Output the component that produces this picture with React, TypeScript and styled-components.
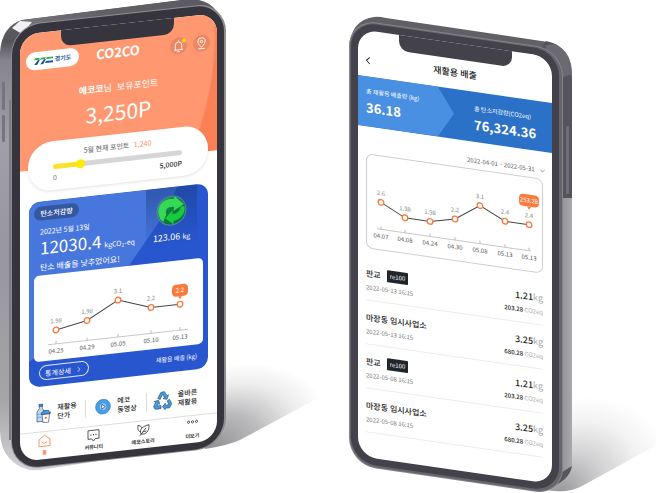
import React from "react";
import styled, { createGlobalStyle } from "styled-components";
import { ChevronDown, ChevronLeft, ChevronRight } from "lucide-react";

const GlobalStyle = createGlobalStyle`
  *, *::before, *::after { box-sizing: border-box; }
  body {
    margin: 0;
    background: #fff;
    color: #222;
    font-family: "Noto Sans CJK KR", "Noto Sans", sans-serif;
    font-size: 7px;
    line-height: 10px;
  }
  h1, h2, p, ul { margin: 0; padding: 0; font: inherit; }
  li { list-style: none; }
  button, input, select { font: inherit; color: inherit; margin: 0; padding: 0; border: 0; background: none; }
  a { color: inherit; text-decoration: none; }
`;

const Stage = styled.main`
  display: grid;
  grid-template-columns: repeat(2, minmax(0, 1fr));
  overflow: hidden;
`;

const Device = styled.section<{ $left: number; $top: number }>`
  position: relative;
  min-height: 493px;
  padding: ${(p) => p.$top}px 0 0 ${(p) => p.$left}px;
`;

const Hardware = styled.svg`
  position: absolute;
  top: 0;
  left: 0;
  width: 335px;
  height: 493px;
  overflow: visible;
`;

const Screen = styled.div<{ $tilt: number; $width: number }>`
  position: relative;
  display: flex;
  flex-direction: column;
  width: ${(p) => p.$width}px;
  min-height: 427px;
  overflow: hidden;
  border-radius: 19px;
  background: #fff;
  transform: skewY(${(p) => p.$tilt}deg);
`;

const Notch = styled.div<{ $color: string }>`
  position: absolute;
  z-index: 2;
  top: -1px;
  left: 41px;
  width: 113px;
  height: 17px;
  border-radius: 0 0 10px 10px;
  background: ${(p) => p.$color};
`;

/* ---------- points screen ---------- */

const PointsHero = styled.header`
  position: relative;
  display: flex;
  flex-direction: column;
  align-items: center;
  height: 137px;
  padding-top: 19px;
  color: #fff;
  background: radial-gradient(ellipse 230px 260px at -34px 20px, #ff9871 99%, #fc8056 100%);
`;

const TopBar = styled.div`
  display: grid;
  grid-template-columns: 1fr auto 1fr;
  align-items: center;
  width: 100%;
  padding: 0 7px 0 6px;
`;

const AgencyLink = styled.a`
  display: flex;
  align-items: center;
  justify-content: center;
  gap: 2px;
  width: 53px;
  height: 18px;
  border-radius: 9px;
  background: #fff;
  color: #23579b;
  font-size: 6px;
  font-weight: 700;
`;

const Brand = styled.h1`
  font-size: 13px;
  font-weight: 700;
  line-height: 18px;
`;

const TopActions = styled.div`
  display: flex;
  justify-content: flex-end;
  gap: 6px;
`;

const RoundButton = styled.button`
  display: grid;
  place-items: center;
  width: 17px;
  height: 17px;
  border-radius: 50%;
  background: rgba(190, 90, 60, 0.28);
`;

const Greeting = styled.p`
  margin-top: 19px;
  font-size: 9px;
  line-height: 14px;
  b { font-weight: 700; }
  span { margin-left: 3px; }
`;

const Balance = styled.p`
  margin-top: 2px;
  font-size: 21px;
  font-weight: 400;
  line-height: 30px;
`;

const GoalCard = styled.section`
  position: relative;
  display: flex;
  flex-direction: column;
  height: 49px;
  margin: -27px 9px 0 8px;
  padding: 7px 26px 0 25px;
  border-radius: 24px;
  background: #fff;
  box-shadow: 0 1px 3px rgba(90, 60, 50, 0.16);
`;

const GoalLabel = styled.label`
  text-align: center;
  color: #555;
  em { margin-left: 3px; color: #ff8a60; font-style: normal; }
`;

const GoalRange = styled.input`
  appearance: none;
  display: block;
  width: 100%;
  height: 5px;
  margin-top: 6px;
  border-radius: 3px;
  background: linear-gradient(90deg, #f7e32b 21%, #d6d6d6 21%);
  &::-webkit-slider-thumb {
    appearance: none;
    width: 9px;
    height: 9px;
    border-radius: 50%;
    background: #ffea00;
  }
`;

const RangeEnds = styled.div`
  display: flex;
  justify-content: space-between;
  margin-top: 3px;
  color: #333;
  span:first-child { color: #777; }
  span:last-child { font-weight: 500; }
`;

const CarbonCard = styled.section`
  position: relative;
  height: 185px;
  margin: 10px 9px 0;
  padding: 5px;
  overflow: hidden;
  border-radius: 11px;
  background: #2856cf;
  color: #fff;
  &::before {
    content: "";
    position: absolute;
    inset: 0;
    background: #4776dc;
    clip-path: polygon(0 0, 83% 0, 75% 15%, 55% 41%, 3% 84%, 0 86%);
  }
`;

const CarbonTop = styled.div`
  position: relative;
  display: grid;
  grid-template-columns: 1fr 56px;
  height: 69px;
`;

const CarbonTag = styled.h2`
  width: 45px;
  height: 14px;
  border-radius: 7px;
  background: #35579f;
  font-weight: 500;
  line-height: 14px;
  text-align: center;
`;

const CarbonText = styled.div`
  padding-left: 6px;
  p:nth-child(1) { margin-top: 6px; }
  p:nth-child(3) { font-size: 8px; line-height: 10px; }
`;

const CarbonAmount = styled.p`
  font-size: 17px;
  line-height: 22px;
  white-space: nowrap;
  small { margin-left: 3px; font-size: 7px; }
  sub { font-size: 5px; line-height: 0; vertical-align: -1px; }
`;

const Recycled = styled.div`
  display: flex;
  flex-direction: column;
  align-items: center;
  height: 60px;
  margin: -5px 6px 0 -1px;
  padding-top: 8px;
  background: linear-gradient(rgba(25, 60, 130, 0.5), rgba(30, 65, 170, 0));
  font-size: 9px;
  line-height: 12px;
  white-space: nowrap;
  svg { flex: none; margin-bottom: 5px; }
  small { font-size: 7px; }
`;

const ChartPanel = styled.div`
  position: relative;
  height: 86px;
  border-radius: 5px;
  background: #fff;
  svg { display: block; width: 100%; height: 100%; }
`;

const CarbonFooter = styled.div`
  position: relative;
  display: flex;
  justify-content: space-between;
  align-items: center;
  padding: 4px 6px 0 5px;
  font-size: 6px;
`;

const DetailButton = styled.button`
  display: flex;
  align-items: center;
  justify-content: center;
  gap: 4px;
  width: 50px;
  height: 15px;
  border: 1px solid #dfe7fa;
  border-radius: 8px;
  font-size: 7px;
`;

const Shortcuts = styled.ul`
  display: grid;
  grid-template-columns: 57px 61px 1fr;
  flex: 1;
  align-items: center;
  padding: 9px 14px 0 8px;
  li + li { border-left: 1px solid #ddd; }
`;

const Shortcut = styled.a`
  display: flex;
  align-items: center;
  justify-content: center;
  gap: 6px;
  font-weight: 500;
  line-height: 9px;
  white-space: nowrap;
`;

const TabBar = styled.nav`
  display: grid;
  grid-template-columns: repeat(4, 1fr);
  height: 28px;
  border-top: 1px solid #ddd;
`;

const Tab = styled.a<{ $active?: boolean }>`
  display: flex;
  flex-direction: column;
  align-items: center;
  justify-content: center;
  gap: 1px;
  padding-bottom: 2px;
  color: ${(p) => (p.$active ? "#fb7a43" : "#333")};
  font-size: 5px;
  font-weight: 700;
  line-height: 8px;
`;

/* ---------- emission screen ---------- */

const PageHeader = styled.header`
  display: grid;
  grid-template-columns: 20px 1fr 20px;
  align-items: center;
  height: 46px;
  padding: 13px 0 0;
  h1 { font-size: 9px; font-weight: 500; text-align: center; }
  button { display: grid; place-items: center; color: #333; }
`;

const Totals = styled.section`
  display: grid;
  grid-template-columns: 96px 1fr;
  height: 50px;
  background: #2b71c7;
  color: #fff;
`;

const Total = styled.div<{ $first?: boolean }>`
  padding: ${(p) => (p.$first ? "10px 0 0 8px" : "12px 0 0 20px")};
  background: ${(p) => (p.$first ? "#4990e3" : "transparent")};
  clip-path: ${(p) => (p.$first ? "polygon(0 0, 83% 0, 100% 50%, 83% 100%, 0 100%)" : "none")};
  font-size: 6px;
  white-space: nowrap;
  strong { display: block; font-size: 13px; line-height: 22px; }
`;

const PeriodRow = styled.div`
  display: flex;
  align-items: center;
  justify-content: flex-end;
  gap: 4px;
  padding: 14px 6px 3px 0;
  color: #555;
  svg { flex: none; }
`;

const Period = styled.select`
  appearance: none;
  height: 10px;
  font-size: 6px;
  line-height: 10px;
`;

const HistoryChart = styled.div`
  height: 95px;
  margin: 0 9px 8px 8px;
  border: 1px solid #cfcfcf;
  border-radius: 7px;
  svg { display: block; width: 100%; height: 100%; }
`;

const Records = styled.ul`
  margin: 0 9px 0 8px;
`;

const Record = styled.li`
  display: flex;
  justify-content: space-between;
  padding: 9px 0 5px;
  border-bottom: 1px solid #ecebf3;
  line-height: 14px;
`;

const Place = styled.h2`
  display: flex;
  align-items: center;
  gap: 6px;
  height: 15px;
  font-size: 8px;
  font-weight: 500;
`;

const Badge = styled.span`
  padding: 0 3px;
  border-radius: 1px;
  background: #20262c;
  color: #fff;
  font-size: 6px;
  font-weight: 400;
  line-height: 12px;
`;

const Stamp = styled.time`
  display: block;
  color: #777;
  font-size: 6px;
`;

const Measure = styled.div`
  padding-top: 1px;
  text-align: right;
  color: #aaa;
  p { height: 14px; font-size: 9px; }
  p + p { font-size: 6px; }
  b { color: #222; font-weight: 500; }
`;

/* ---------- drawings ---------- */

type Point = { x: number; y: number; value?: string; date: string };

function LineChart({ points, axis, width, height, callout, calloutY, from, to }: {
  points: Point[]; axis: number; width: number; height: number;
  callout: string; calloutY: number; from: number; to: number;
}) {
  const last = points[points.length - 1];
  const half = callout.length > 4 ? 10 : 8;
  return (
    <svg viewBox={`0 0 ${width} ${height}`} fontSize="6" textAnchor="middle" role="img" aria-label="재활용 배출 그래프">
      <path d={`M${from} ${axis}H${to}`} stroke="#c8c8c8" />
      {points.map((p, i) => (
        <path key={i} d={`M${p.x} ${axis - 3}v3`} stroke="#bbb" />
      ))}
      <polyline points={points.map((p) => `${p.x},${p.y}`).join(" ")} fill="none" stroke="#444" />
      {points.map((p, i) => (
        <g key={i}>
          <circle cx={p.x} cy={p.y} r="2.8" fill="#fff" stroke="#f9793f" strokeWidth="1.3" />
          {p.value && <text x={p.x} y={p.y - 7} fill="#888">{p.value}</text>}
          <text x={p.x} y={axis + 9} fill="#555">{p.date}</text>
        </g>
      ))}
      <rect x={last.x - half} y={calloutY - 6} width={half * 2} height="12" rx="4" fill="#fa7b3e" />
      <path d={`M${last.x - 2} ${calloutY + 6}l2 3 2-3z`} fill="#fa7b3e" />
      <text x={last.x} y={calloutY + 2} fill="#fff">{callout}</text>
    </svg>
  );
}

const weekly: Point[] = [
  { x: 22, y: 56, value: "1.98", date: "04.25" },
  { x: 53, y: 50, value: "1.98", date: "04.29" },
  { x: 84, y: 33, value: "3.1", date: "05.05" },
  { x: 117, y: 44, value: "2.2", date: "05.10" },
  { x: 146, y: 44, date: "05.13" },
];

const history: Point[] = [
  { x: 14, y: 46, value: "2.6", date: "04.07" },
  { x: 38, y: 58, value: "1.98", date: "04.08" },
  { x: 63, y: 58, value: "1.98", date: "04.24" },
  { x: 88, y: 52, value: "2.2", date: "04.30" },
  { x: 113, y: 35, value: "3.1", date: "05.08" },
  { x: 138, y: 47, value: "2.4", date: "05.13" },
  { x: 162, y: 47, value: "2.4", date: "05.13" },
];

const records = [
  { place: "판교", tag: "re100", time: "2022-05-13 16:15", kg: "1.21", co2: "203.28" },
  { place: "마장동 임시사업소", time: "2022-05-13 16:15", kg: "3.25", co2: "680.28" },
  { place: "판교", tag: "re100", time: "2022-05-08 16:15", kg: "1.21", co2: "203.28" },
  { place: "마장동 임시사업소", time: "2022-05-08 16:15", kg: "3.25", co2: "680.28" },
];

const LeftHardware = () => (
  <Hardware viewBox="0 0 335 493" aria-hidden="true">
    <defs>
      <linearGradient id="sideA" x1="0" y1="0" x2="0" y2="1">
        <stop offset="0" stopColor="#66656c" /><stop offset=".09" stopColor="#55545b" />
        <stop offset=".13" stopColor="#85848a" /><stop offset=".3" stopColor="#a09fa5" />
        <stop offset=".55" stopColor="#98979d" /><stop offset=".85" stopColor="#a5a4a9" />
        <stop offset="1" stopColor="#d2d1d5" />
      </linearGradient>
      <linearGradient id="topA" x1="0" y1="0" x2="1" y2="0">
        <stop offset="0" stopColor="#77767c" /><stop offset=".4" stopColor="#626168" />
        <stop offset=".9" stopColor="#5b5a61" /><stop offset="1" stopColor="#77767c" />
      </linearGradient>
      <radialGradient id="shadeA" cx="0" cy="0" r="1" gradientUnits="userSpaceOnUse" gradientTransform="translate(212 447) rotate(-24) scale(120 74)">
        <stop offset="0" stopColor="#858488" stopOpacity=".9" /><stop offset=".4" stopColor="#8e8d91" stopOpacity=".6" />
        <stop offset=".75" stopColor="#999" stopOpacity=".18" /><stop offset="1" stopColor="#999" stopOpacity="0" />
      </radialGradient>
    </defs>
    <path d="M205 355H330L322 396 240 440Q230 445 205 449Z" fill="url(#shadeA)" />
    <path d="M0 52Q2 26 22 20L182 0Q218 -6 226 34V424Q224 438 205 445L46 469Q24 474 10 459Q0 449 0 430Z" fill="url(#sideA)" />
    <path d="M15 24L22 20 182 0Q220 -5 226 36L208 14 24 34Z" fill="url(#topA)" />
    <path d="M12 28L20 21 32 22 22 34Z" fill="#f1f1f3" />
    <path d="M10 100V440" stroke="#7e7d84" strokeWidth="2" />
    <rect x="2" y="82" width="3" height="28" rx="1" fill="#76757b" />
    <rect x="2" y="115" width="3" height="27" rx="1" fill="#76757b" />
    <g transform="translate(118 0) skewY(-6.3)">
      <rect x="-107" y="14" width="215" height="445" rx="29" fill="#8d8c92" />
      <rect x="-106" y="15" width="212" height="443" rx="28" fill="#36343c" />
    </g>
  </Hardware>
);

const RightHardware = () => (
  <Hardware viewBox="335 0 335 493" aria-hidden="true">
    <defs>
      <radialGradient id="shadeB" cx="0" cy="0" r="1" gradientUnits="userSpaceOnUse" gradientTransform="translate(560 492) rotate(-34) scale(116 84)">
        <stop offset="0" stopColor="#858488" stopOpacity=".85" /><stop offset=".4" stopColor="#929195" stopOpacity=".42" />
        <stop offset=".75" stopColor="#999" stopOpacity=".12" /><stop offset="1" stopColor="#999" stopOpacity="0" />
      </radialGradient>
      <linearGradient id="sideB" x1="0" y1="0" x2="1" y2="0">
        <stop offset="0" stopColor="#8a898f" /><stop offset=".6" stopColor="#9d9ca2" /><stop offset="1" stopColor="#a9a8ad" />
      </linearGradient>
    </defs>
    <path d="M550 385H665L655 446 582 486Q568 494 545 490Z" fill="url(#shadeB)" />
    <path d="M349 50Q350 20 374 17Q378 16 386 18L548 42Q572 48 572 82V462Q571 475 556 483L536 487Z" fill="#606067" />
    <path d="M546 41L553 43Q572 50 572 84V198H556V75Q556 57 540 49Z" fill="#55545b" />
    <path d="M546 45L555 44Q572 52 572 74L561 78Q558 58 546 51Z" fill="#6b6a71" />
    <path d="M558 198H572V466L558 476Z" fill="url(#sideB)" />
    <path d="M559 474L572 466Q570 479 552 487Z" fill="#57565e" />
    <rect x="566" y="126" width="3" height="68" rx="1" fill="#6f6e75" />
    <g transform="translate(455 0) skewY(8.2)">
      <rect x="-106" y="34" width="214" height="446" rx="27" fill="#85848b" />
      <rect x="-105" y="35" width="212" height="444" rx="26" fill="#66656c" />
      <rect x="-104" y="36" width="208" height="441" rx="25" fill="#434149" />
    </g>
  </Hardware>
);

const AgencyMark = () => (
  <svg width="19" height="7" viewBox="0 0 19 7" aria-hidden="true">
    <path d="M1 0H6L5 2H0zM7 0H12L11 2H6zM13 0H19V2H12z" fill="#37a650" />
    <path d="M4 2H6L3 7H0zM10 2H12L9 7H6zM12 4H19V6H11z" fill="#1c4f9c" />
  </svg>
);

const Bell = () => (
  <svg width="17" height="17" viewBox="0 0 17 17" fill="none" stroke="#fff" strokeWidth=".9" aria-hidden="true">
    <path d="M4 12.5H13M5.3 12.5V8A3.2 3.5 0 0 1 11.7 8V12.5M8.5 3.2V4.5M7.2 14.3H9.8" />
    <circle cx="14" cy="3.8" r="1.8" fill="#ffe600" stroke="none" />
  </svg>
);

const Pin = () => (
  <svg width="17" height="17" viewBox="0 0 17 17" fill="none" stroke="#fff" strokeWidth=".9" aria-hidden="true">
    <path d="M8.5 12.5C6.5 10 4.8 8.7 4.8 6.6A3.7 3.7 0 0 1 12.2 6.6C12.2 8.7 10.5 10 8.5 12.5ZM5 13.8H12" />
    <circle cx="8.5" cy="6.7" r="1.2" />
  </svg>
);

const GreenMark = () => (
  <svg width="31" height="31" viewBox="0 0 30 30" aria-hidden="true">
    <defs>
      <linearGradient id="green" x1="0" y1="0" x2="1" y2="1">
        <stop offset="0" stopColor="#23a35a" /><stop offset=".5" stopColor="#0b7a3e" /><stop offset="1" stopColor="#0a6e44" />
      </linearGradient>
    </defs>
    <circle cx="15" cy="15" r="14.5" fill="#5f93a6" opacity=".7" />
    <circle cx="15" cy="15" r="13.4" fill="url(#green)" />
    <path d="M3 19C0 8 8 2 17 4L18 1.5 27 10 17 15.5 17.5 11.5C11 10.5 8.5 13 10 18L7 25Q4 23 3 19Z" fill="#35d955" />
    <path d="M27.5 12C29 20 23 25 17 25V28.5L9 22 16 14.5V18.5C20 18.5 23 16.5 24 12Z" fill="#17cc3b" />
  </svg>
);

const Bottle = () => (
  <svg width="15" height="20" viewBox="0 0 15 20" stroke="#26394c" strokeWidth=".6" aria-hidden="true">
    <rect x="3" y=".5" width="3.5" height="2.2" fill="#409be8" />
    <path d="M3.3 2.7H6.3V5L8.5 8V18H1V8L3.3 5Z" fill="#b9dcf7" />
    <path d="M1 10.5H5.5M1 13.5H5.5" stroke="#3e8ed8" />
    <path d="M6 11H13.5L12.6 19.5H7Z" fill="#fff" />
    <path d="M5.3 11V9.3H6.5L7.2 7.5H12.5L13.2 9.3H14.3V11Z" fill="#409be8" />
    <circle cx="9.8" cy="14.8" r="1" fill="#e35b4e" stroke="none" />
  </svg>
);

const Play = () => (
  <svg width="16" height="16" viewBox="0 0 16 16" aria-hidden="true">
    <circle cx="8" cy="8" r="7.4" fill="#449ee8" stroke="#2c78bd" strokeWidth=".6" />
    <circle cx="8" cy="8" r="3.2" fill="#9bd0f6" />
    <path d="M6.7 5.6L10.4 8 6.7 10.4Z" fill="#fff" stroke="#27415b" strokeWidth=".7" />
  </svg>
);

const Recycle = () => (
  <svg width="19" height="19" viewBox="0 0 19 19" fill="#429ee8" stroke="#26415c" strokeWidth=".6" aria-hidden="true">
    <path d="M4.7 6.8L7.6 1.5Q8 .8 9 .8H11.5L14 5 15.5 4.3 14 8.7 10 7.5 11.5 6.6 9.3 3.2 7.2 8Z" />
    <path d="M14.2 10.2L16.5 9 18.5 13Q18.8 14 18 15L16.7 17.4H12.2V19L9.4 15.6 12.2 12.5V14.3H16Z" />
    <path d="M8 14.3V17.4H3Q1.8 17.4 1.3 16L.5 14.5 2.8 10.3 1.2 9.5 5.6 8.8 6.8 12.8 5.2 12 3.9 14.3Z" />
  </svg>
);

const TabIcon = ({ kind }: { kind: "home" | "chat" | "leaf" | "more" }) => (
  <svg width="13" height="13" viewBox="0 0 13 13" fill="none" stroke="currentColor" strokeWidth=".8" aria-hidden="true">
    {kind === "home" && <path d="M1 5.2L6.5 1 12 5.2V12H1ZM4 7.8Q6.5 10.5 9 7.8" />}
    {kind === "chat" && (
      <><path d="M1 1.5H12V10H8.2L6.5 12.3 4.8 10H1Z" /><path d="M3.5 6h1M6 6h1M8.5 6h1" strokeWidth="1.2" /></>
    )}
    {kind === "leaf" && (
      <path d="M3 12L9 5M4 10.5C2 5 6 3 12 2C12.5 8 9.5 12 4 10.5ZM3.3 8.5C0 6 1 3.5 1 1.5Q4 2 5 4.5M6 8.5L9.5 8" />
    )}
    {kind === "more" && (
      <><circle cx="2.5" cy="4" r="1.1" /><circle cx="6.5" cy="4" r="1.1" /><circle cx="10.5" cy="4" r="1.1" /></>
    )}
  </svg>
);

/* ---------- screens ---------- */

const PointsScreen = () => (
  <Screen $tilt={-6.3} $width={197}>
    <Notch $color="#36343c" />
    <PointsHero>
      <TopBar>
        <AgencyLink href="#agency"><AgencyMark />경기도</AgencyLink>
        <Brand>CO2CO</Brand>
        <TopActions>
          <RoundButton aria-label="알림"><Bell /></RoundButton>
          <RoundButton aria-label="위치"><Pin /></RoundButton>
        </TopActions>
      </TopBar>
      <Greeting><b>에코코</b>님 <span>보유포인트</span></Greeting>
      <Balance>3,250P</Balance>
    </PointsHero>
    <GoalCard>
      <GoalLabel htmlFor="goal">5월 현재 포인트 <em>1,240</em></GoalLabel>
      <GoalRange id="goal" type="range" min={0} max={5000} defaultValue={960} />
      <RangeEnds><span>0</span><span>5,000P</span></RangeEnds>
    </GoalCard>
    <CarbonCard>
      <CarbonTop>
        <div>
          <CarbonTag>탄소저감량</CarbonTag>
          <CarbonText>
            <p>2022년 5월 13일</p>
            <CarbonAmount>12030.4<small>kgCO<sub>2</sub>-eq</small></CarbonAmount>
            <p>탄소 배출을 낮추었어요!</p>
          </CarbonText>
        </div>
        <Recycled><GreenMark /><p>123.06 <small>kg</small></p></Recycled>
      </CarbonTop>
      <ChartPanel>
        <LineChart points={weekly} axis={70} width={169} height={86} callout="2.2" calloutY={30} from={14} to={154} />
      </ChartPanel>
      <CarbonFooter>
        <DetailButton>통계상세 <ChevronRight size={8} /></DetailButton>
        <span>재활용 배출 (kg)</span>
      </CarbonFooter>
    </CarbonCard>
    <Shortcuts>
      <li><Shortcut href="#price"><Bottle /><span>재활용<br />단가</span></Shortcut></li>
      <li><Shortcut href="#video"><Play /><span>에코<br />동영상</span></Shortcut></li>
      <li><Shortcut href="#guide"><Recycle /><span>올바른<br />재활용</span></Shortcut></li>
    </Shortcuts>
    <TabBar>
      <Tab href="#home" $active><TabIcon kind="home" />홈</Tab>
      <Tab href="#community"><TabIcon kind="chat" />커뮤니티</Tab>
      <Tab href="#story"><TabIcon kind="leaf" />에코스토리</Tab>
      <Tab href="#more"><TabIcon kind="more" />더보기</Tab>
    </TabBar>
  </Screen>
);

const EmissionScreen = () => (
  <Screen $tilt={8.2} $width={194}>
    <Notch $color="#434149" />
    <PageHeader>
      <button aria-label="뒤로"><ChevronLeft size={12} strokeWidth={2} /></button>
      <h1>재활용 배출</h1>
    </PageHeader>
    <Totals>
      <Total $first>총 재활용 배출량 (kg)<strong>36.18</strong></Total>
      <Total>총 탄소저감량(CO2eq)<strong>76,324.36</strong></Total>
    </Totals>
    <PeriodRow>
      <Period aria-label="조회 기간"><option>2022-04-01 ~ 2022-05-31</option></Period>
      <ChevronDown size={7} />
    </PeriodRow>
    <HistoryChart>
      <LineChart points={history} axis={73} width={175} height={93} callout="253.28" calloutY={23} from={10} to={164} />
    </HistoryChart>
    <Records>
      {records.map((r, i) => (
        <Record key={i}>
          <div>
            <Place>{r.place}{r.tag && <Badge>{r.tag}</Badge>}</Place>
            <Stamp>{r.time}</Stamp>
          </div>
          <Measure>
            <p><b>{r.kg}</b>kg</p>
            <p><b>{r.co2}</b> CO2eq</p>
          </Measure>
        </Record>
      ))}
    </Records>
  </Screen>
);

export default function App() {
  return (
    <>
      <GlobalStyle />
      <Stage>
        <Device $left={20} $top={24}><LeftHardware /><PointsScreen /></Device>
        <Device $left={23} $top={43}><RightHardware /><EmissionScreen /></Device>
      </Stage>
    </>
  );
}
